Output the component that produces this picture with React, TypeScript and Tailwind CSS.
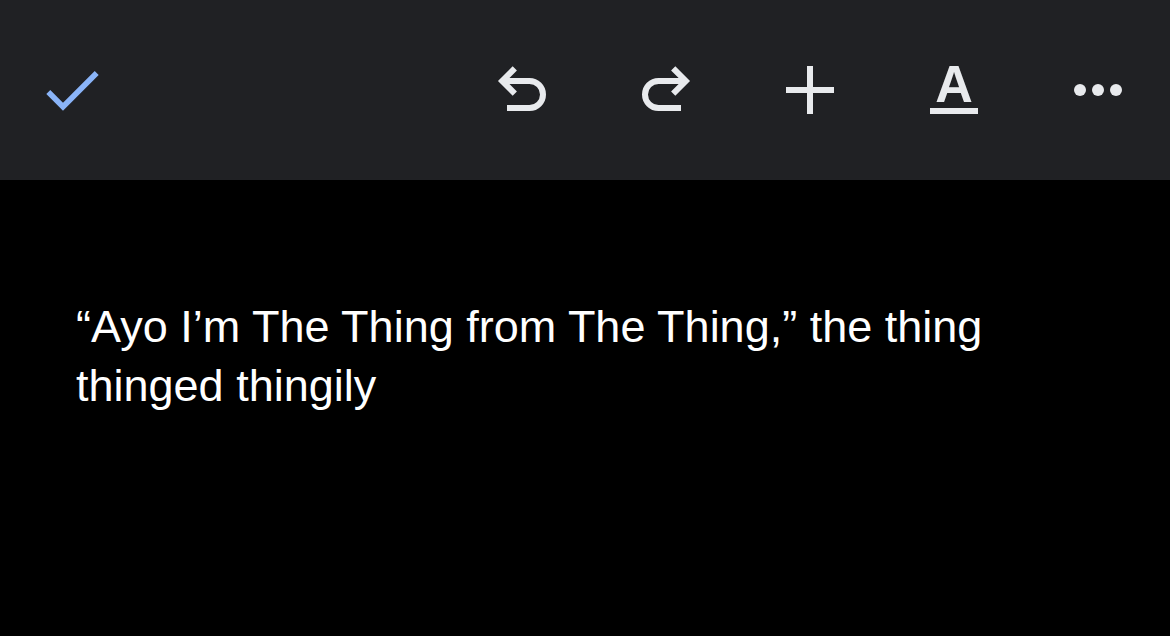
import { useState, type ReactNode } from "react";

type ToolProps = { label: string; children: ReactNode };

function Tool({ label, children }: ToolProps) {
  return (
    <button type="button" aria-label={label} className="size-18 shrink-0 cursor-pointer">
      {children}
    </button>
  );
}

type StrokeIconProps = { d: string; className?: string };

function StrokeIcon({ d, className = "stroke-[6]" }: StrokeIconProps) {
  return (
    <svg viewBox="0 0 72 72" fill="none" stroke="currentColor" aria-hidden="true" className={`block size-full ${className}`}>
      <path d={d} />
    </svg>
  );
}

export default function App() {
  const [text, setText] = useState(
    "“Ayo I’m The Thing from The Thing,” the thing thinged thingily",
  );

  return (
    <div className="flex min-h-screen flex-col bg-black font-['Liberation_Sans',Arial,sans-serif]">
      <header className="flex items-center justify-between bg-[#202124] px-9 py-[54px] text-[#e8eaed]">
        <div className="flex text-[#8ab4f8]">
          <Tool label="Done">
            <StrokeIcon className="stroke-[5.6]" d="M12.3 38 27 52.7 60.7 19" />
          </Tool>
        </div>
        <div className="flex items-center gap-18">
          <Tool label="Undo">
            <StrokeIcon d="M28.8 14.4 16.2 27 28.8 39.6M16.2 27H43.5a13.5 13.5 0 0 1 0 27H21" />
          </Tool>
          <Tool label="Redo">
            <StrokeIcon d="M43.2 14.4 55.8 27 43.2 39.6M55.8 27H28.5a13.5 13.5 0 0 0 0 27H51" />
          </Tool>
          <Tool label="Insert">
            <StrokeIcon d="M36 12v48M12 36h48" />
          </Tool>
          <Tool label="Text formatting">
            <span className="mx-3 -mt-3 flex h-15 flex-col items-center justify-end border-b-6 border-current text-[52px] leading-[48px] font-bold">
              A
            </span>
          </Tool>
          <Tool label="More options">
            <svg viewBox="0 0 72 72" fill="currentColor" aria-hidden="true" className="block size-full">
              <circle cx="18" cy="36" r="6" />
              <circle cx="36" cy="36" r="6" />
              <circle cx="54" cy="36" r="6" />
            </svg>
          </Tool>
        </div>
      </header>
      <main className="flex grow flex-col px-19 pt-[117px]">
        <textarea
          aria-label="Document text"
          value={text}
          onChange={(event) => setText(event.target.value)}
          spellCheck={false}
          className="block w-full grow resize-none bg-transparent text-[45px] leading-[59px] text-white outline-none"
        />
      </main>
    </div>
  );
}
